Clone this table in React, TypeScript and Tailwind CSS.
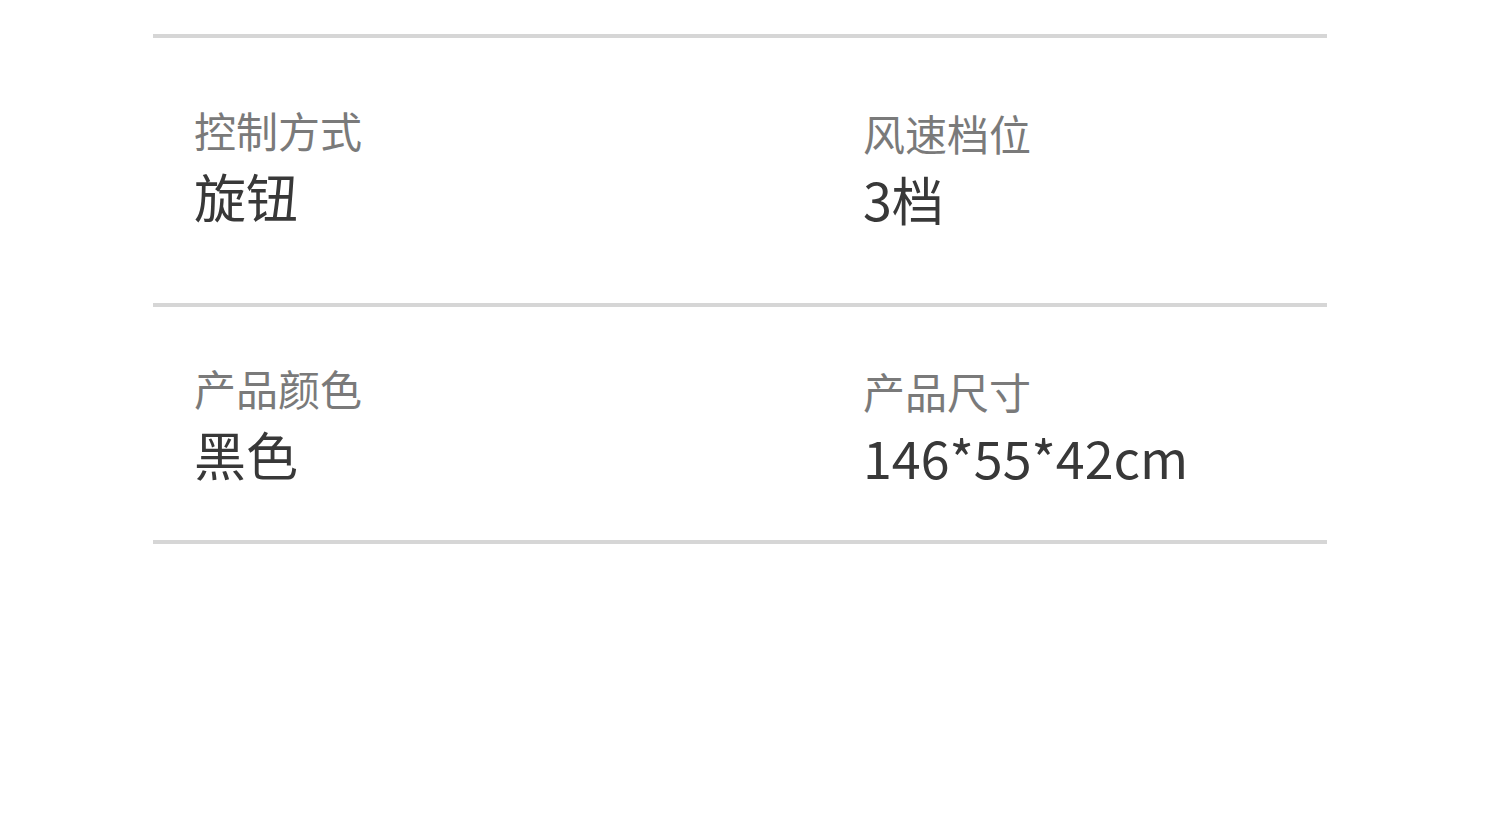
const specs = [
  {
    left: { label: "控制方式", value: "旋钮" },
    right: { label: "风速档位", value: "3档" },
    pad: "pt-[71px] pb-[78px]",
  },
  {
    left: { label: "产品颜色", value: "黑色" },
    right: { label: "产品尺寸", value: "146*55*42cm" },
    pad: "pt-[60px] pb-[57px]",
  },
];

const Cell = ({ label, value, shift }: { label: string; value: string; shift?: boolean }) => (
  <div className={shift ? "mt-[3px]" : ""}>
    <p className="text-[42px] leading-[42px] text-[#7a7a7a]">{label}</p>
    <p className="mt-[19px] text-[52px] leading-[52px] text-[#383838]">{value}</p>
  </div>
);

export default function App() {
  return (
    <div
      className="w-[1500px] h-[820px] bg-white pt-[34px]"
      style={{ fontFamily: '"Noto Sans CJK SC", "Noto Sans", sans-serif' }}
    >
      <div className="ml-[153px] w-[1174px]">
        <div className="h-[4px] bg-[#d6d6d6]" />
        {specs.map((row, i) => (
          <div key={i}>
            <div className={`grid grid-cols-[669px_1fr] pl-[41px] ${row.pad}`}>
              <Cell label={row.left.label} value={row.left.value} />
              <Cell label={row.right.label} value={row.right.value} shift />
            </div>
            <div className="h-[4px] bg-[#d6d6d6]" />
          </div>
        ))}
      </div>
    </div>
  );
}
